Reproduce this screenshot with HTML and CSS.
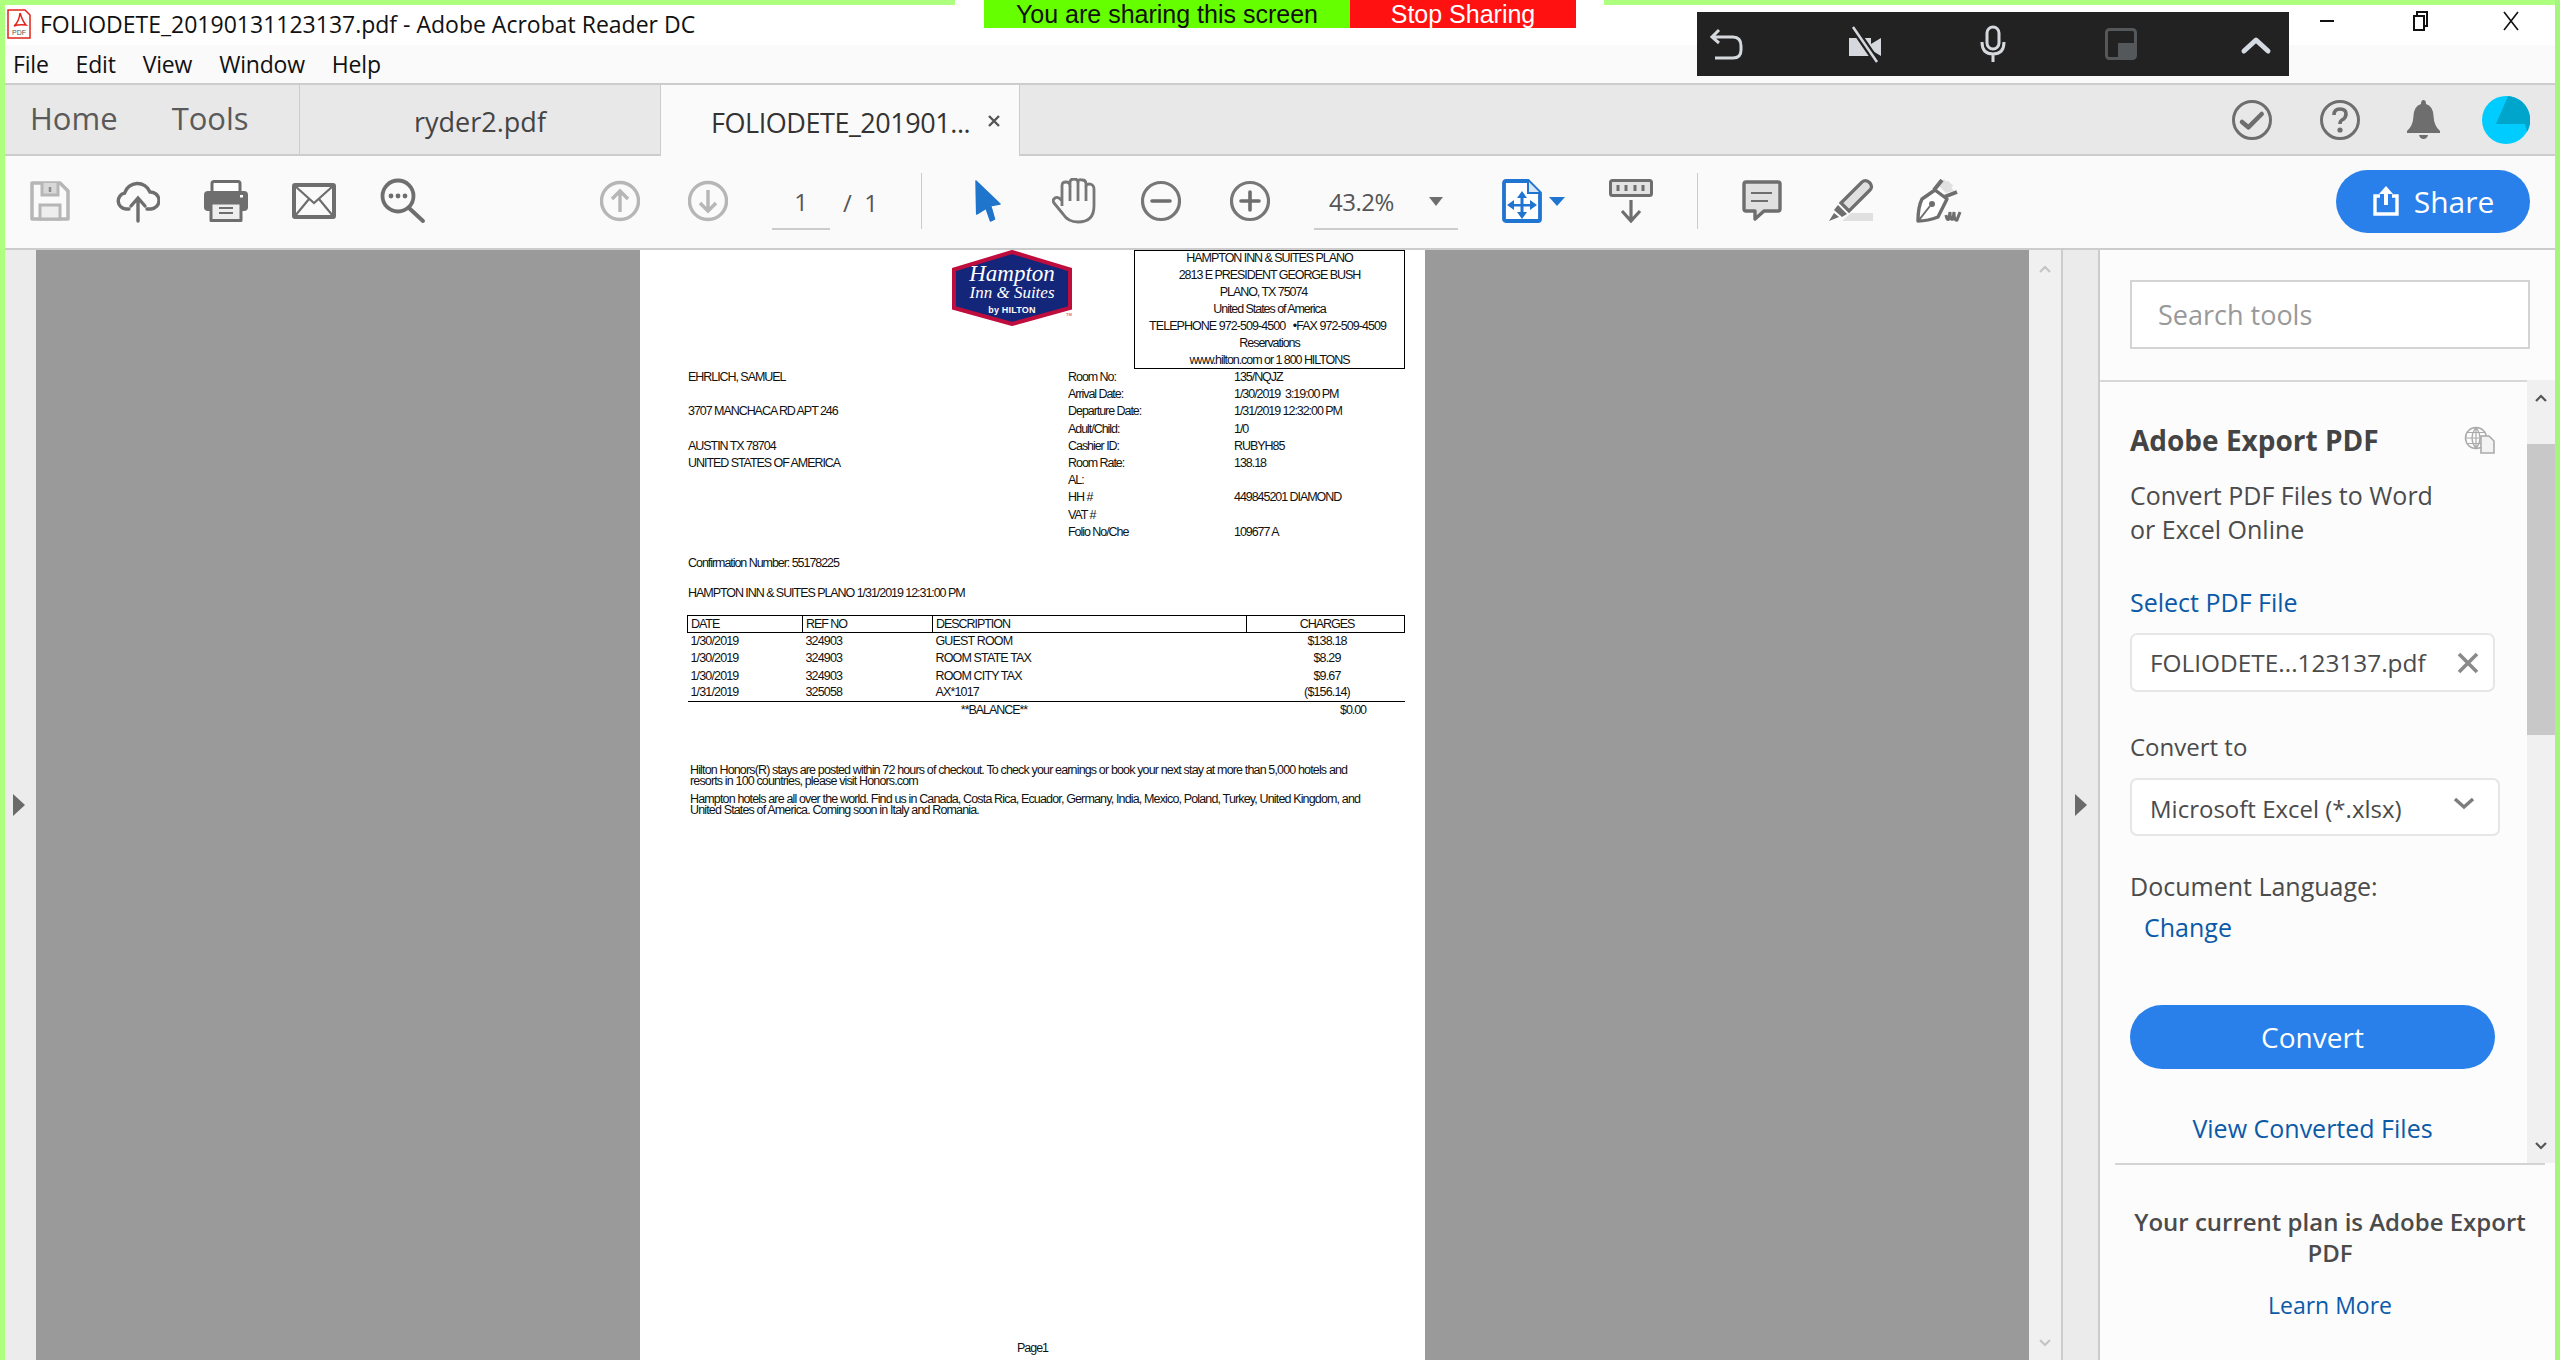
FILE: index.html
```html
<!DOCTYPE html>
<html lang="en">
<head>
  <meta charset="UTF-8" />
  <title>FOLIODETE_20190131123137.pdf - Adobe Acrobat Reader DC</title>
  <link rel="stylesheet" href="styles.css">
</head>
<body>
  <div class="frame">
    <div class="green-strip strip-left"></div>
    <div class="green-strip strip-right"></div>

    <div class="share-banner">
      <div class="share-msg">You are sharing this screen</div>
      <div class="share-stop">Stop Sharing</div>
    </div>

    <div class="meeting-bar">
      <svg class="meet-icon back" viewBox="0 0 40 40"><path d="M10 6 L3 13 L10 19 M4 13 H24 Q32 13 32 22 V26 Q32 34 24 34 H6" fill="none" stroke="#d5d9de" stroke-width="3"/></svg>
      <svg class="meet-icon" viewBox="0 0 40 40"><path d="M4 14 H26 V32 H4 Z" fill="#d5d9de"/><path d="M26 20 L36 14 V32 L26 26 Z" fill="#d5d9de"/><path d="M8 3 L32 38" stroke="#222" stroke-width="7"/><path d="M8 3 L32 38" stroke="#d5d9de" stroke-width="2.5"/></svg>
      <svg class="meet-icon" viewBox="0 0 40 40"><rect x="14" y="3" width="12" height="22" rx="6" fill="none" stroke="#d5d9de" stroke-width="3"/><path d="M9 18 Q9 30 20 30 Q31 30 31 18 M20 30 V38" fill="none" stroke="#d5d9de" stroke-width="3"/></svg>
      <svg class="meet-icon pane" viewBox="0 0 40 40"><rect x="5.5" y="5.5" width="29" height="29" rx="3" fill="#222" stroke="#55585b" stroke-width="3"/><path d="M17 19 H34 V34 H17 Z" fill="#55585b"/></svg>
      <svg class="meet-icon last" viewBox="0 0 40 40"><path d="M8 27 L20 16 L32 27" fill="none" stroke="#d5dbe3" stroke-width="5" stroke-linecap="round" stroke-linejoin="round"/></svg>
    </div>

    <header class="titlebar">
      <svg class="pdf-file" viewBox="0 0 24 30"><path d="M1 1 H18 L23 6 V29 H1 Z" fill="#fff" stroke="#e2231a" stroke-width="1.5"/><path d="M7 17 Q12 13 13 4 Q16 13 19 16 Q12 15 7 17 Z" fill="none" stroke="#e2231a" stroke-width="1.5"/><text x="12" y="26" class="pdf-file-text">PDF</text></svg>
      <div class="title-text">FOLIODETE_20190131123137.pdf - Adobe Acrobat Reader DC</div>
      <div class="win-controls">
        <svg class="win-btn" viewBox="0 0 46 24"><path d="M16 12 H30" stroke="#111" stroke-width="2"/></svg>
        <svg class="win-btn" viewBox="0 0 46 24"><path d="M18 7 H28 V21 H18 Z M21 7 V3 H31 V17 H28" fill="none" stroke="#111" stroke-width="2"/></svg>
        <svg class="win-btn" viewBox="0 0 46 24"><path d="M16 3 L30 21 M30 3 L16 21" stroke="#111" stroke-width="1.6"/></svg>
      </div>
    </header>

    <nav class="menubar">
      <span>File</span><span>Edit</span><span>View</span><span>Window</span><span>Help</span>
    </nav>

    <div class="tabbar">
      <div class="tab-home"><span>Home</span><span>Tools</span></div>
      <div class="tab-doc">ryder2.pdf</div>
      <div class="tab-doc active"><span class="tab-name">FOLIODETE_201901...</span><svg class="tab-close" viewBox="0 0 14 14"><path d="M2 2 L12 12 M12 2 L2 12" stroke="#555" stroke-width="2.4"/></svg></div>
      <div class="tab-actions">
        <svg class="tab-icon" viewBox="0 0 40 40"><circle cx="20" cy="20" r="18.5" fill="none" stroke="#6e6e6e" stroke-width="3"/><path d="M10 22 L16.3 27.3 L29.7 14" fill="none" stroke="#6e6e6e" stroke-width="4.5" stroke-linecap="round" stroke-linejoin="round"/></svg>
        <svg class="tab-icon help" viewBox="0 0 40 40"><circle cx="20" cy="20" r="18.5" fill="none" stroke="#6e6e6e" stroke-width="3"/><path d="M14 15 Q14 9 20 9 Q26 9 26 14 Q26 18 22 20 Q20 21 20 24" fill="none" stroke="#6e6e6e" stroke-width="3.6"/><circle cx="20" cy="30" r="2.6" fill="#6e6e6e"/></svg>
        <svg class="tab-icon bell" viewBox="0 0 33 40"><path d="M16.5 0 Q19 0 19 4 Q26 6 26.5 16 Q27 26 33 31 V33 H0 V31 Q6 26 6.5 16 Q7 6 14 4 Q14 0 16.5 0 Z M12 35 H21 Q20 39 16.5 39 Q13 39 12 35 Z" fill="#6e6e6e"/></svg>
        <svg class="avatar" viewBox="0 0 48 48"><circle cx="24" cy="24" r="24" fill="#00ccff"/><path d="M26 0 A24 24 0 0 1 45 36 L43 28 H14 Z" fill="#00a5cc"/></svg>
      </div>
    </div>

    <div class="toolbar">
      <svg class="tool" viewBox="0 0 40 40"><path d="M2 2 H30 L38 10 V38 H2 Z" fill="none" stroke="#b6b6b6" stroke-width="3.5" stroke-linejoin="round"/><path d="M12 2 V14 H28 V2" fill="#d8d8d8" stroke="#b6b6b6" stroke-width="3"/><path d="M20 6 V11" stroke="#8c8c8c" stroke-width="2.5"/><rect x="10" y="24" width="20" height="14" fill="#eee" stroke="#b6b6b6" stroke-width="3"/></svg>
      <svg class="tool wide" viewBox="0 0 44 44"><path d="M13 30 H10 A8 8 0 0 1 8.5 14.2 A13.5 13.5 0 0 1 34 13 A8.5 8.5 0 0 1 35 30 H31" fill="none" stroke="#6e6e6e" stroke-width="3.4" stroke-linecap="round"/><path d="M22 42 V20 M15 27 L22 19 L29 27" fill="none" stroke="#6e6e6e" stroke-width="3.4" stroke-linecap="round"/></svg>
      <svg class="tool wide" viewBox="0 0 44 42"><rect x="8" y="1.5" width="28" height="16" rx="2" fill="#fff" stroke="#6e6e6e" stroke-width="3"/><rect x="0" y="11" width="44" height="20" rx="4" fill="#6e6e6e"/><rect x="36" y="15" width="3" height="2.5" fill="#fff"/><path d="M7 23 H37 V40.5 H7 Z" fill="#eee" stroke="#6e6e6e" stroke-width="3" stroke-linejoin="round"/><path d="M15 28 H29 M15 33 H29" stroke="#6e6e6e" stroke-width="2.2"/></svg>
      <svg class="tool wide" viewBox="0 0 44 36"><rect x="2" y="2" width="40" height="32" rx="1" fill="none" stroke="#6e6e6e" stroke-width="4"/><path d="M3 3 L22 20 L41 3 M3 33 L17 16 M41 33 L27 16" fill="none" stroke="#6e6e6e" stroke-width="2.2"/></svg>
      <svg class="tool find" viewBox="0 0 46 46"><circle cx="18" cy="18" r="15.5" fill="none" stroke="#6e6e6e" stroke-width="3.8"/><path d="M29 30 L43 43" stroke="#6e6e6e" stroke-width="4" stroke-linecap="round"/><circle cx="11" cy="18" r="2.4" fill="#6e6e6e"/><circle cx="18" cy="18" r="2.4" fill="#6e6e6e"/><circle cx="25" cy="18" r="2.4" fill="#6e6e6e"/></svg>

      <svg class="tool nav-first" viewBox="0 0 40 40"><circle cx="20" cy="20" r="18.5" fill="none" stroke="#b6b6b6" stroke-width="3.4"/><path d="M20 31 V10 M12 18 L20 10 L28 18" fill="none" stroke="#b6b6b6" stroke-width="3.4"/></svg>
      <svg class="tool" viewBox="0 0 40 40"><circle cx="20" cy="20" r="18.5" fill="none" stroke="#b6b6b6" stroke-width="3.4"/><path d="M20 9 V30 M12 22 L20 30 L28 22" fill="none" stroke="#b6b6b6" stroke-width="3.4"/></svg>
      <div class="page-num">1</div>
      <div class="page-total">/ &nbsp;1</div>
      <div class="tool-sep first"></div>

      <svg class="tool pointer" viewBox="0 0 40 44"><path d="M8 2 L32 25 L22.7 26.7 L26.5 40 L22.5 42 L18 29.3 L8.7 35 Z" fill="#1f75cb" stroke="#1f75cb" stroke-width="1.5" stroke-linejoin="round"/></svg>
      <svg class="tool hand" viewBox="0 0 44 46"><path d="M10 28 V8 Q10 4 14 4 Q18 4 18 8 V4 Q18 1 22 1 Q26 1 26 4 Q26 1 30 2 Q34 2 34 6 V8 Q34 6 38 6 Q42 7 42 11 V28 Q42 44 26 44 Q16 44 11 36 L2 25 Q0 22 3 20 Q6 18 10 23" fill="none" stroke="#777" stroke-width="2.8" stroke-linejoin="round"/><path d="M18 8 V23 M26 4 V23 M34 8 V23" fill="none" stroke="#777" stroke-width="2.8"/></svg>
      <svg class="tool zoom-out" viewBox="0 0 40 40"><circle cx="20" cy="20" r="18.5" fill="none" stroke="#777" stroke-width="3.2"/><path d="M11 20 H29" stroke="#6e6e6e" stroke-width="3.6" stroke-linecap="round"/></svg>
      <svg class="tool zoom-in" viewBox="0 0 40 40"><circle cx="20" cy="20" r="18.5" fill="none" stroke="#777" stroke-width="3.2"/><path d="M11 20 H29 M20 11 V29" stroke="#6e6e6e" stroke-width="3.6" stroke-linecap="round"/></svg>
      <div class="zoom-box"><span>43.2%</span><i class="caret"></i></div>
      <svg class="tool fit" viewBox="0 0 40 44"><path d="M4 2 H26 L38 14 V40 Q38 42 36 42 H4 Q2 42 2 40 V4 Q2 2 4 2 Z" fill="#fff" stroke="#2075d0" stroke-width="3.8"/><path d="M26 2 V14 H38" fill="#d9e6f5" stroke="#2075d0" stroke-width="2"/><path d="M20 12 L25 19 H21.5 V25 H28 V21 L35 26 L28 31 V27.5 H21.5 V33 H25 L20 40 L15 33 H18.5 V27.5 H12 V31 L5 26 L12 21 V25 H18.5 V19 H15 Z" fill="#2075d0"/></svg>
      <i class="caret blue"></i>
      <svg class="tool wide read" viewBox="0 0 44 44"><rect x="1.5" y="1.5" width="41" height="15" rx="2" fill="#e2e2e2" stroke="#6e6e6e" stroke-width="3"/><path d="M9 6 V12 M17 6 V12 M26 6 V12 M34 6 V12" stroke="#6e6e6e" stroke-width="3"/><path d="M22 21 V42 M13 32 L22 42 L31 32" fill="none" stroke="#6e6e6e" stroke-width="3.2"/></svg>
      <div class="tool-sep second"></div>
      <svg class="tool comment" viewBox="0 0 40 42"><path d="M4 2 H36 Q38 2 38 4 V29 Q38 31 36 31 H22 L13 39 V31 H4 Q2 31 2 29 V4 Q2 2 4 2 Z" fill="#e0e0e0" stroke="#6e6e6e" stroke-width="3.4" stroke-linejoin="round"/><path d="M9 13 H30 M9 21 H26" stroke="#6e6e6e" stroke-width="2"/></svg>
      <svg class="tool highlight" viewBox="0 0 46 44"><path d="M14 42 H45 V34 H23 Z" fill="#e0e0e0"/><path d="M13 24 L34 3 Q38 0 42 4 Q45 8 42 11 L21 32 Z" fill="#e0e0e0" stroke="#6e6e6e" stroke-width="3.2"/><path d="M10 26 L19 35 L14 38 L6 31 Z" fill="#6e6e6e"/><path d="M6 34 L11 38 L1 42 Z" fill="#6e6e6e"/></svg>
      <svg class="tool sign" viewBox="0 0 46 44"><path d="M28 0 L38 12 L30 14 L22 6 Z" fill="#e0e0e0"/><path d="M36 8 L30 3" stroke="#e0e0e0" stroke-width="4"/><path d="M19 11 L31 20 L22 38 Q12 42 2 42 Q2 28 6 20 Z" fill="#fff" stroke="#6e6e6e" stroke-width="3.4" stroke-linejoin="round"/><path d="M18 11 L26 1 M28 18 L41 13" stroke="#6e6e6e" stroke-width="4"/><circle cx="16" cy="25" r="3" fill="#6e6e6e"/><path d="M3 41 L14 27" stroke="#6e6e6e" stroke-width="2"/><path d="M30 36 Q31 42 33 40 L34 33 Q34 42 37 40 L38 33 Q38 42 41 41 L44 33" fill="none" stroke="#6e6e6e" stroke-width="3"/></svg>
      <button class="share-btn"><svg class="share-icon" viewBox="0 0 28 32"><path d="M8 11 H3 V29 H25 V11 H20" fill="none" stroke="#fff" stroke-width="3.4"/><path d="M14 1 L21 9 H16 V20 H12 V9 H7 Z" fill="#fff"/></svg>Share</button>
    </div>

    <main class="viewer">
      <div class="left-pane"><i class="arrow-right"></i></div>
      <div class="doc-area">
        <article class="page">
          <div class="page-head">
            <svg class="logo" viewBox="0 0 120 76">
              <path d="M60 2 L118 19.5 V58 L60 74 L2 58 V19.5 Z" fill="#14267a" stroke="#bf0d3e" stroke-width="4"/>
              <text x="60" y="31" class="logo-script big">Hampton</text>
              <text x="60" y="48" class="logo-script">Inn &amp; Suites</text>
              <text x="60" y="63" class="logo-small">by HILTON</text>
              <text x="117" y="66" class="logo-tm">TM</text>
            </svg>
            <div class="hotel-box">
              <div>HAMPTON INN &amp; SUITES PLANO</div>
              <div>2813 E PRESIDENT GEORGE BUSH</div>
              <div class="nudge">PLANO, TX 75074</div>
              <div>United States of America</div>
              <div class="phone">TELEPHONE 972-509-4500 &nbsp; •FAX 972-509-4509</div>
              <div>Reservations</div>
              <div>www.hilton.com or 1 800 HILTONS</div>
            </div>
          </div>

          <div class="guest">
            <div class="address">
              <div>EHRLICH, SAMUEL</div>
              <div class="gap">3707 MANCHACA RD APT 246</div>
              <div class="gap">AUSTIN TX 78704</div>
              <div>UNITED STATES OF AMERICA</div>
            </div>
            <div class="stay">
              <span>Room No:</span><span>135/NQJZ</span>
              <span>Arrival Date:</span><span>1/30/2019 &nbsp;3:19:00 PM</span>
              <span>Departure Date:</span><span>1/31/2019 12:32:00 PM</span>
              <span>Adult/Child:</span><span>1/0</span>
              <span>Cashier ID:</span><span>RUBYH85</span>
              <span>Room Rate:</span><span>138.18</span>
              <span>AL:</span><span></span>
              <span>HH #</span><span>449845201 DIAMOND</span>
              <span>VAT #</span><span></span>
              <span>Folio No/Che</span><span>109677 A</span>
            </div>
          </div>

          <div class="confirm">Confirmation Number: 55178225</div>
          <div class="stamp">HAMPTON INN &amp; SUITES PLANO 1/31/2019 12:31:00 PM</div>

          <table class="charges">
            <thead>
              <tr><th>DATE</th><th>REF NO</th><th>DESCRIPTION</th><th class="amount">CHARGES</th></tr>
            </thead>
            <tbody>
              <tr><td>1/30/2019</td><td>324903</td><td>GUEST ROOM</td><td class="amount">$138.18</td></tr>
              <tr><td>1/30/2019</td><td>324903</td><td>ROOM STATE TAX</td><td class="amount">$8.29</td></tr>
              <tr><td>1/30/2019</td><td>324903</td><td>ROOM CITY TAX</td><td class="amount">$9.67</td></tr>
              <tr><td>1/31/2019</td><td>325058</td><td>AX*1017</td><td class="amount">($156.14)</td></tr>
            </tbody>
          </table>
          <div class="balance"><span>**BALANCE**</span><span>$0.00</span></div>

          <div class="notes">
            <p>Hilton Honors(R) stays are posted within 72 hours of checkout. To check your earnings or book your next stay at more than 5,000 hotels and<br>resorts in 100 countries, please visit Honors.com</p>
            <p>Hampton hotels are all over the world. Find us in Canada, Costa Rica, Ecuador, Germany, India, Mexico, Poland, Turkey, United Kingdom, and<br>United States of America. Coming soon in Italy and Romania.</p>
          </div>
          <div class="page-foot">Page1</div>
        </article>
      </div>
      <div class="doc-scroll">
        <svg class="chev" viewBox="0 0 12 8"><path d="M1 7 L6 2 L11 7" fill="none" stroke="#c4c4c4" stroke-width="2"/></svg>
        <svg class="chev" viewBox="0 0 12 8"><path d="M1 1 L6 6 L11 1" fill="none" stroke="#c4c4c4" stroke-width="2"/></svg>
      </div>
      <div class="collapse-bar"><i class="arrow-right"></i></div>

      <aside class="side">
        <div class="side-search"><div class="search-box">Search tools</div></div>
        <div class="side-scroll">
          <div class="side-body">
            <div class="panel-head">
              <h2>Adobe Export PDF</h2>
              <svg class="globe" viewBox="0 0 32 28"><circle cx="12" cy="12" r="10.5" fill="none" stroke="#aaa" stroke-width="1.5"/><path d="M1.5 12 H22.5 M12 1.5 V22.5 M3 6.5 H21 M3 17.5 H21 M12 1.5 Q4 12 12 22.5 M12 1.5 Q20 12 12 22.5" fill="none" stroke="#aaa" stroke-width="1.2"/><path d="M17 10 H25 L30 15 V27 H17 Z" fill="#f3f3f3" stroke="#aaa" stroke-width="1.6"/></svg>
            </div>
            <p class="panel-desc">Convert PDF Files to Word<br>or Excel Online</p>
            <a class="panel-link select">Select PDF File</a>
            <div class="field file">FOLIODETE...123137.pdf<svg class="file-x" viewBox="0 0 24 24"><path d="M3 3 L21 21 M21 3 L3 21" stroke="#8a8a8a" stroke-width="3.6"/></svg></div>
            <div class="panel-label convert-to">Convert to</div>
            <div class="field format"><span class="format-name">Microsoft Excel (*.xlsx)</span><svg class="format-chev" viewBox="0 0 22 14"><path d="M2 3 L11 11 L20 3" fill="none" stroke="#7d7d7d" stroke-width="3.4"/></svg></div>
            <div class="panel-label doc-lang">Document Language:</div>
            <a class="panel-link change">Change</a>
            <button class="convert-btn">Convert</button>
            <a class="panel-link view-files">View Converted Files</a>
          </div>
          <div class="side-track">
            <svg class="chev dark" viewBox="0 0 12 8"><path d="M1 7 L6 2 L11 7" fill="none" stroke="#555" stroke-width="2.2"/></svg>
            <div class="side-thumb"></div>
            <svg class="chev dark" viewBox="0 0 12 8"><path d="M1 1 L6 6 L11 1" fill="none" stroke="#555" stroke-width="2.2"/></svg>
          </div>
        </div>
        <div class="side-foot">
          <div class="plan">Your current plan is Adobe Export PDF</div>
          <a class="panel-link learn">Learn More</a>
        </div>
      </aside>
    </main>
  </div>
</body>
</html>
```

FILE: styles.css
```css
* {
  box-sizing: border-box;
}
html, body {
  margin: 0;
  height: 100%;
}
body {
  background: #fff;
  color: #222;
  font-family: "Open Sans", "Noto Sans", sans-serif;
}
.frame {
  width: 2560px;
  height: 1360px;
  position: relative;
  display: flex;
  flex-direction: column;
  overflow: hidden;
  border-left: 5px solid #aeff7e;
  border-right: 5px solid #a6f57f;
}

/* screen share overlays */
.green-strip {
  position: absolute;
  top: 0;
  height: 5px;
  background: #aeff7e;
  z-index: 3;
}
.strip-left {
  left: 0;
  width: 950px;
}
.strip-right {
  left: 1599px;
  right: 0;
}
.share-banner {
  position: absolute;
  top: 0;
  left: 979px;
  display: flex;
  height: 28px;
  z-index: 4;
  font-family: "Liberation Sans", sans-serif;
  font-size: 25px;
  line-height: 28px;
  text-align: center;
}
.share-msg {
  width: 366px;
  background: #66ff00;
  color: #111;
}
.share-stop {
  width: 226px;
  background: #ff1111;
  color: #fff;
}
.meeting-bar {
  position: absolute;
  top: 12px;
  left: 1692px;
  width: 592px;
  height: 64px;
  background: #222;
  display: flex;
  align-items: center;
  padding: 0 12px;
  z-index: 4;
}
.meet-icon {
  width: 40px;
  height: 40px;
  flex: none;
  margin-right: 88px;
}
.meet-icon.back {
  margin-right: 96px;
}
.meet-icon.pane {
  margin-right: 95px;
}
.meet-icon.last {
  margin-right: 0;
}

/* title + menu */
.titlebar {
  height: 45px;
  padding-top: 3px;
  background: #fff;
  display: flex;
  align-items: center;
}
.pdf-file {
  width: 24px;
  height: 30px;
  margin-left: 2px;
}
.pdf-file-text {
  font-family: "Liberation Sans", sans-serif;
  font-size: 7px;
  fill: #555;
  text-anchor: middle;
}
.title-text {
  margin-left: 9px;
  font-size: 23px;
  color: #111;
}
.win-controls {
  margin-left: auto;
  margin-right: 21px;
  display: flex;
  gap: 46px;
  margin-top: -6px;
}
.win-btn {
  width: 46px;
  height: 24px;
}
.menubar {
  height: 40px;
  background: #fafafa;
  border-bottom: 2px solid #ccc;
  display: flex;
  align-items: center;
  gap: 27px;
  padding-left: 8px;
  font-size: 23px;
  letter-spacing: -0.2px;
  color: #111;
}

/* tabs */
.tabbar {
  height: 71px;
  background: #e8e8e8;
  border-bottom: 2px solid #ccc;
  display: flex;
  color: #444;
}
.tab-home {
  width: 295px;
  display: flex;
  align-items: center;
  gap: 54px;
  padding: 0 0 4px 25px;
  font-size: 31px;
  color: #5a5a5a;
  border-right: 1px solid #ccc;
}
.tab-doc {
  width: 360px;
  display: flex;
  align-items: center;
  justify-content: center;
  font-size: 27px;
  padding-top: 4px;
}
.tab-doc.active {
  height: 71px;
  background: #fafafa;
  justify-content: flex-start;
  padding-left: 50px;
  color: #333;
  border-left: 1px solid #ccc;
  border-right: 1px solid #ccc;
}
.tab-name {
  letter-spacing: -0.45px;
}
.tab-close {
  width: 14px;
  height: 14px;
  margin-left: 17px;
  margin-top: -4px;
}
.tab-actions {
  margin-left: auto;
  padding-right: 25px;
  display: flex;
  align-items: center;
}
.tab-icon {
  width: 40px;
  height: 40px;
}
.tab-icon.help {
  margin-left: 48px;
}
.tab-icon.bell {
  width: 33px;
  margin-left: 47px;
}
.avatar {
  width: 48px;
  height: 48px;
  margin-left: 42px;
}

/* toolbar */
.toolbar {
  height: 94px;
  background: #fafafa;
  border-bottom: 2px solid #ccc;
  display: flex;
  align-items: center;
  padding: 0 25px 2px 25px;
  color: #555;
}
.tool {
  width: 40px;
  height: 44px;
  flex: none;
  margin-right: 48px;
}
.tool.wide {
  width: 44px;
  margin-left: -2px;
  margin-right: 46px;
}
.tool.find {
  width: 46px;
  height: 46px;
  margin-left: -2px;
  margin-right: 0;
}
.tool.nav-first {
  margin-left: 174px;
}
.page-num {
  width: 58px;
  height: 56px;
  line-height: 56px;
  margin-left: -4px;
  border-bottom: 2px solid #ccc;
  text-align: center;
  font-size: 24px;
  margin-top: 2px;
}
.page-total {
  width: 91px;
  padding-left: 13px;
  font-size: 24px;
  margin-top: 2px;
}
.tool-sep {
  width: 1px;
  height: 56px;
  background: #ccc;
  flex: none;
}
.tool-sep.first {
  margin-right: 46px;
}
.tool.pointer {
  margin-right: 44px;
}
.tool.hand {
  width: 44px;
  height: 46px;
  margin-right: 45px;
}
.tool.zoom-out {
  margin-right: 49px;
}
.tool.zoom-in {
  margin-right: 44px;
}
.zoom-box {
  width: 144px;
  height: 56px;
  margin-top: 2px;
  border-bottom: 2px solid #ccc;
  display: flex;
  align-items: center;
  font-size: 24px;
  padding-left: 15px;
  letter-spacing: -0.5px;
}
.caret {
  width: 0;
  height: 0;
  flex: none;
  border-left: 7px solid transparent;
  border-right: 7px solid transparent;
  border-top: 9px solid #6e6e6e;
  margin-left: 35px;
}
.caret.blue {
  border-top-color: #2075d0;
  border-left-width: 8px;
  border-right-width: 8px;
  margin-left: 7px;
  margin-right: 46px;
}
.tool.fit {
  margin-left: 44px;
  margin-right: 0;
}
.tool.read {
  margin-right: 44px;
}
.tool-sep.second {
  margin-right: 44px;
}
.tool.comment {
  margin-right: 46px;
}
.tool.highlight {
  width: 46px;
  margin-right: 42px;
}
.tool.sign {
  width: 46px;
  margin-right: 0;
}
.share-btn {
  margin-left: auto;
  width: 194px;
  height: 63px;
  border: none;
  border-radius: 32px;
  background: #2a80ea;
  color: #fff;
  display: flex;
  align-items: center;
  justify-content: center;
  gap: 14px;
  font-family: inherit;
  font-size: 30px;
}
.share-icon {
  width: 28px;
  height: 32px;
}

/* document viewer */
.viewer {
  flex: 1;
  display: flex;
  min-height: 0;
}
.left-pane {
  width: 31px;
  background: #ececec;
  display: flex;
  align-items: center;
  justify-content: center;
  padding-right: 3px;
}
.arrow-right {
  width: 0;
  height: 0;
  border-top: 11px solid transparent;
  border-bottom: 11px solid transparent;
  border-left: 12px solid #6a6a6a;
}
.doc-area {
  flex: 1;
  background: #9a9a9a;
  display: flex;
  justify-content: center;
}
.page {
  width: 785px;
  background: #fff;
  display: flex;
  flex-direction: column;
  color: #111;
  font-family: "Liberation Sans", sans-serif;
  font-size: 12.5px;
  letter-spacing: -1.05px;
}
.page-head {
  display: flex;
}
.logo {
  width: 120px;
  height: 76px;
  margin-left: 312px;
}
.logo-script {
  font-family: "Liberation Serif", serif;
  font-style: italic;
  font-size: 17px;
  fill: #fff;
  text-anchor: middle;
  letter-spacing: 0;
}
.logo-script.big {
  font-size: 23px;
}
.logo-small {
  font-family: "Liberation Sans", sans-serif;
  font-weight: bold;
  font-size: 9px;
  fill: #fff;
  text-anchor: middle;
  letter-spacing: 0.2px;
}
.logo-tm {
  font-family: "Liberation Sans", sans-serif;
  font-size: 4px;
  fill: #bf0d3e;
  text-anchor: middle;
  letter-spacing: 0;
}
.hotel-box {
  width: 271px;
  height: 119px;
  margin-left: 62px;
  border: 1px solid #000;
  text-align: center;
  line-height: 17px;
  overflow: hidden;
}
.hotel-box div:first-child {
  margin-top: -1px;
}
.hotel-box .nudge {
  padding-right: 12px;
}
.hotel-box .phone {
  letter-spacing: -0.95px;
  padding-right: 4px;
}
.guest {
  display: flex;
  padding-left: 48px;
  line-height: 17.2px;
}
.address {
  width: 380px;
}
.address .gap {
  margin-top: 17.2px;
}
.stay {
  display: grid;
  grid-template-columns: 166px 1fr;
  grid-auto-rows: 17.2px;
}
.confirm {
  margin: 14px 0 0 48px;
  line-height: 17px;
}
.stamp {
  margin: 13px 0 0 48px;
  line-height: 17px;
}
.charges {
  width: 718px;
  margin: 13px 0 0 47px;
  border-collapse: collapse;
  table-layout: fixed;
  border-bottom: 1px solid #000;
}
.charges th, .charges td {
  height: 17.2px;
  padding: 0 0 0 3px;
  font-weight: normal;
  text-align: left;
  white-space: nowrap;
  line-height: 16px;
}
.charges td {
  letter-spacing: -0.85px;
}
.charges th {
  border: 1px solid #000;
}
.charges th:nth-child(1) {
  width: 115px;
}
.charges th:nth-child(2) {
  width: 130px;
}
.charges th:nth-child(3) {
  width: 314px;
}
.charges .amount {
  text-align: center;
}
.balance {
  display: flex;
  margin-left: 47px;
  width: 718px;
  line-height: 17px;
}
.balance span:first-child {
  width: 614px;
  text-align: center;
}
.balance span:last-child {
  flex: 1;
  text-align: center;
}
.notes {
  margin: 46px 0 0 50px;
  line-height: 11.5px;
  letter-spacing: -0.85px;
  white-space: nowrap;
}
.notes p {
  margin: 0 0 6px;
}
.page-foot {
  margin-top: auto;
  padding-bottom: 5px;
  text-align: center;
}
.doc-scroll {
  width: 34px;
  background: #f0f0f0;
  border-right: 2px solid #ccc;
  display: flex;
  flex-direction: column;
  justify-content: space-between;
  align-items: center;
  padding: 15px 0 13px;
}
.chev {
  width: 12px;
  height: 8px;
}
.collapse-bar {
  width: 37px;
  background: #ebebeb;
  border-right: 2px solid #ccc;
  display: flex;
  align-items: center;
  justify-content: center;
}

/* right side panel */
.side {
  width: 455px;
  background: #fcfcfc;
  display: flex;
  flex-direction: column;
  color: #4b4b4b;
  font-size: 25px;
}
.side-search {
  padding: 30px 25px 31px 30px;
}
.search-box {
  height: 69px;
  background: #fff;
  border: 2px solid #d4d4d4;
  padding-left: 26px;
  line-height: 66px;
  color: #999;
  font-size: 27px;
}
.side-scroll {
  height: 783px;
  display: flex;
}
.side-body {
  width: 427px;
  border-top: 2px solid #d8d8d8;
  padding-left: 30px;
  line-height: 34px;
  white-space: nowrap;
}
.panel-head {
  display: flex;
  align-items: center;
  margin-top: 41px;
}
.panel-head h2 {
  margin: 0;
  font-size: 28px;
  line-height: 34px;
  font-weight: 700;
  color: #444;
}
.globe {
  width: 32px;
  height: 28px;
  margin-left: auto;
  margin-right: 31px;
}
.panel-desc {
  margin: 21px 0 0;
}
.panel-link {
  display: block;
  color: #0b5aa8;
}
.select {
  margin-top: 39px;
}
.field {
  width: 365px;
  height: 59px;
  margin-top: 14px;
  padding-left: 18px;
  border: 2px solid #e6e6e6;
  border-radius: 7px;
  background: #fff;
  display: flex;
  align-items: center;
  font-size: 24.4px;
}
.file-x {
  width: 24px;
  height: 24px;
  margin-left: auto;
  margin-right: 13px;
}
.convert-to {
  margin-top: 38px;
  font-size: 24px;
}
.field.format {
  width: 370px;
  height: 58px;
  font-size: 24px;
}
.format-name {
  padding-top: 3px;
}
.format-chev {
  width: 22px;
  height: 14px;
  margin-left: auto;
  margin-right: 23px;
  margin-top: -8px;
}
.doc-lang {
  margin-top: 33px;
}
.change {
  margin: 7px 0 0 14px;
}
.convert-btn {
  display: block;
  width: 365px;
  height: 64px;
  margin-top: 61px;
  border: none;
  border-radius: 32px;
  background: #2a80ea;
  color: #fff;
  font-family: inherit;
  font-size: 28px;
}
.view-files {
  margin-top: 42px;
  width: 365px;
  text-align: center;
}
.side-track {
  width: 28px;
  background: #f0f0f0;
  display: flex;
  flex-direction: column;
  align-items: center;
  padding: 14px 0 13px;
}
.side-thumb {
  align-self: stretch;
  height: 291px;
  margin: 42px 0 auto;
  background: #c8c8c8;
}
.side-foot {
  margin: 0 10px 0 15px;
  border-top: 2px solid #d4d4d4;
  text-align: center;
  line-height: 31px;
  font-size: 24px;
}
.plan {
  margin-top: 41px;
  font-weight: 600;
}
.learn {
  margin-top: 22px;
  font-size: 23px;
}
```
